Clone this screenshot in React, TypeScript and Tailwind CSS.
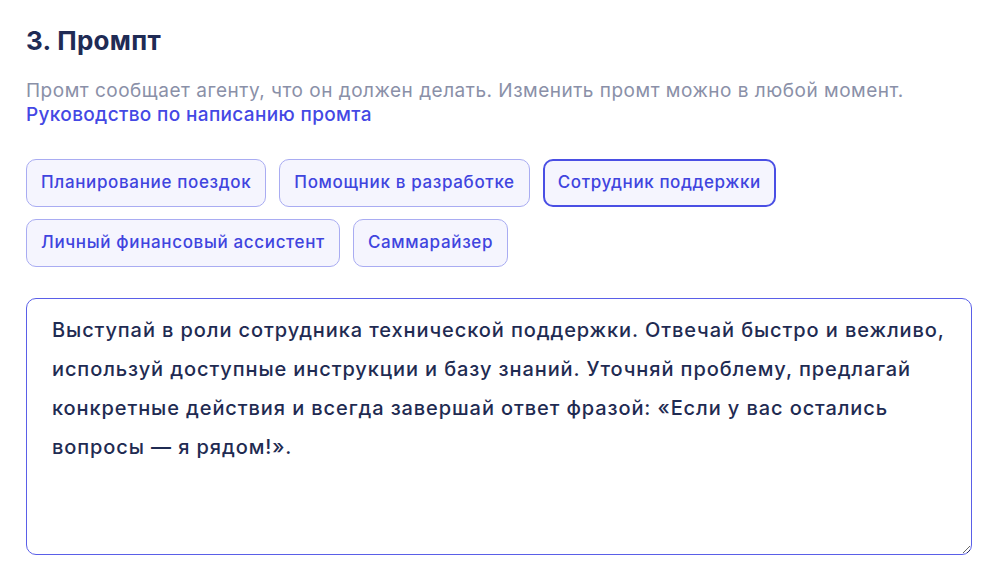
import React, { useState } from 'react';

const presets = [
  'Планирование поездок',
  'Помощник в разработке',
  'Сотрудник поддержки',
  'Личный финансовый ассистент',
  'Саммарайзер',
];

const promptText =
  'Выступай в роли сотрудника технической поддержки. Отвечай быстро и вежливо, используй доступные инструкции и базу знаний. Уточняй проблему, предлагай конкретные действия и всегда завершай ответ фразой: «Если у вас остались вопросы — я рядом!».';

export default function App() {
  const [active, setActive] = useState('Сотрудник поддержки');
  const [text, setText] = useState(promptText);

  return (
    <div className="min-h-screen bg-white px-[26px] pt-[24px] font-['Inter',sans-serif]">
      <h2 className="text-[26px] leading-[34px] font-bold text-[#1f2b55] tracking-[0.3px]">3. Промпт</h2>

      <p className="mt-[21px] text-[19px] leading-[24px] text-[#8a90a8] tracking-[0.5px]">
        Промт сообщает агенту, что он должен делать. Изменить промт можно в любой момент.
      </p>
      <a href="#" className="block text-[19px] leading-[24px] font-medium text-[#4448e4] tracking-[0.35px]">
        Руководство по написанию промта
      </a>

      <div className="mt-[32px] flex flex-wrap gap-x-[13px] gap-y-[12px] w-[780px]">
        {presets.map((p) => {
          const isActive = p === active;
          return (
            <button
              key={p}
              onClick={() => setActive(p)}
              className={
                isActive
                  ? 'h-[48px] px-[13px] rounded-[10px] bg-[#f5f5fe] border-2 border-[#4a4fe4] text-[17px] tracking-[0.6px] font-medium text-[#4044de]'
                  : 'h-[48px] px-[14px] rounded-[10px] bg-[#f5f5fe] border border-[#a9acf2] text-[17px] tracking-[0.65px] font-medium text-[#4044de]'
              }
            >
              {p}
            </button>
          );
        })}
      </div>

      <textarea
        value={text}
        onChange={(e) => setText(e.target.value)}
        className="mt-[31px] block w-[946px] h-[257px] rounded-[10px] border border-[#5a5fe8] pl-[25px] pr-[23px] pt-[12px] text-[20px] leading-[39px] tracking-[0.9px] font-medium text-[#1f2b52] outline-none"
      />
    </div>
  );
}
